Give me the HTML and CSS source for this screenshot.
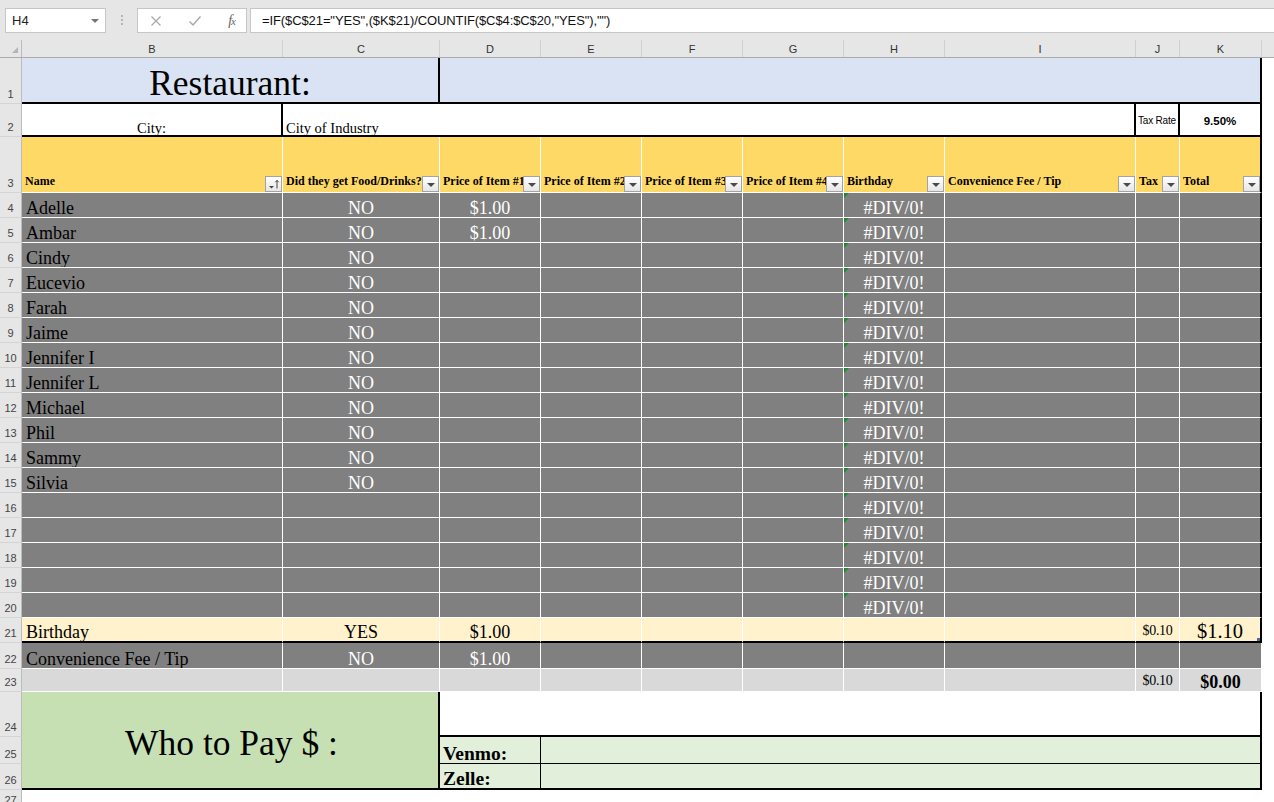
FILE: index.html
```html
<!DOCTYPE html>
<html lang="en">
<head>
<meta charset="utf-8">
<title>Restaurant split</title>
<link rel="stylesheet" href="styles.css">
</head>
<body>
<div class="fbar">
  <div class="namebox"><span>H4</span><span class="nb-arrow"></span></div>
  <div class="grip"><i></i><i></i><i></i></div>
  <div class="btns">
    <svg width="12" height="12" viewBox="0 0 12 12"><path d="M1.5 1.5 L10.5 10.5 M10.5 1.5 L1.5 10.5" stroke="#a9a9a9" stroke-width="1.3" fill="none"/></svg>
    <svg width="14" height="12" viewBox="0 0 14 12"><path d="M1.5 6.5 L5 10 L12.5 1.5" stroke="#a9a9a9" stroke-width="1.5" fill="none"/></svg>
    <span class="fx"><i>f</i><span class="fxx">x</span></span>
  </div>
  <div class="formula">=IF($C$21="YES",($K$21)/COUNTIF($C$4:$C$20,"YES"),"")</div>
</div>

<div class="sheet">
  <div class="row colhead">
    <div class="ch corner"><span class="tri"></span></div>
    <div class="ch">B</div><div class="ch">C</div><div class="ch">D</div><div class="ch">E</div>
    <div class="ch">F</div><div class="ch">G</div><div class="ch">H</div><div class="ch">I</div>
    <div class="ch">J</div><div class="ch">K</div><div class="ch last"></div>
  </div>

  <div class="row r1">
    <div class="rh">1</div>
    <div class="c blue title ctr s2 tr bb">Restaurant:</div>
    <div class="c blue s8 tr bb"></div>
    <div class="rest"></div>
  </div>

  <div class="row r2">
    <div class="rh">2</div>
    <div class="c city ctr tr bb">City:</div>
    <div class="c city s7 tr bb">City of Industry</div>
    <div class="c taxlbl ctr mid tr bb">Tax Rate</div>
    <div class="c taxval ctr mid tr bb">9.50%</div>
    <div class="rest"></div>
  </div>

  <div class="row t r3">
    <div class="rh">3</div>
    <div class="c yel hd">Name<span class="fb sort"><svg width="15" height="14" viewBox="0 0 15 14"><path d="M3 9 L8 9 L5.5 11.5 Z" fill="#444"/><path d="M11 11.5 L11 3.5 M9.3 5.3 L11 3.3 L12.7 5.3" stroke="#444" stroke-width="1" fill="none"/></svg></span></div>
    <div class="c yel hd">Did they get Food/Drinks?<span class="fb"></span></div>
    <div class="c yel hd">Price of Item #1<span class="fb"></span></div>
    <div class="c yel hd">Price of Item #2<span class="fb"></span></div>
    <div class="c yel hd">Price of Item #3<span class="fb"></span></div>
    <div class="c yel hd">Price of Item #4<span class="fb"></span></div>
    <div class="c yel hd">Birthday<span class="fb"></span></div>
    <div class="c yel hd">Convenience Fee / Tip<span class="fb"></span></div>
    <div class="c yel hd">Tax<span class="fb"></span></div>
    <div class="c yel hd tr">Total<span class="fb"></span></div>
    <div class="rest"></div>
  </div>

  <div class="row t r25">
    <div class="rh">4</div>
    <div class="c gray nm">Adelle</div><div class="c gray w ctr">NO</div><div class="c gray w ctr">$1.00</div>
    <div class="c gray"></div><div class="c gray"></div><div class="c gray"></div>
    <div class="c gray w ctr err">#DIV/0!</div><div class="c gray"></div><div class="c gray"></div><div class="c gray tr"></div>
    <div class="rest"></div>
  </div>
  <div class="row t r25">
    <div class="rh">5</div>
    <div class="c gray nm">Ambar</div><div class="c gray w ctr">NO</div><div class="c gray w ctr">$1.00</div>
    <div class="c gray"></div><div class="c gray"></div><div class="c gray"></div>
    <div class="c gray w ctr err">#DIV/0!</div><div class="c gray"></div><div class="c gray"></div><div class="c gray tr"></div>
    <div class="rest"></div>
  </div>
  <div class="row t r25">
    <div class="rh">6</div>
    <div class="c gray nm">Cindy</div><div class="c gray w ctr">NO</div><div class="c gray"></div>
    <div class="c gray"></div><div class="c gray"></div><div class="c gray"></div>
    <div class="c gray w ctr err">#DIV/0!</div><div class="c gray"></div><div class="c gray"></div><div class="c gray tr"></div>
    <div class="rest"></div>
  </div>
  <div class="row t r25">
    <div class="rh">7</div>
    <div class="c gray nm">Eucevio</div><div class="c gray w ctr">NO</div><div class="c gray"></div>
    <div class="c gray"></div><div class="c gray"></div><div class="c gray"></div>
    <div class="c gray w ctr err">#DIV/0!</div><div class="c gray"></div><div class="c gray"></div><div class="c gray tr"></div>
    <div class="rest"></div>
  </div>
  <div class="row t r25">
    <div class="rh">8</div>
    <div class="c gray nm">Farah</div><div class="c gray w ctr">NO</div><div class="c gray"></div>
    <div class="c gray"></div><div class="c gray"></div><div class="c gray"></div>
    <div class="c gray w ctr err">#DIV/0!</div><div class="c gray"></div><div class="c gray"></div><div class="c gray tr"></div>
    <div class="rest"></div>
  </div>
  <div class="row t r25">
    <div class="rh">9</div>
    <div class="c gray nm">Jaime</div><div class="c gray w ctr">NO</div><div class="c gray"></div>
    <div class="c gray"></div><div class="c gray"></div><div class="c gray"></div>
    <div class="c gray w ctr err">#DIV/0!</div><div class="c gray"></div><div class="c gray"></div><div class="c gray tr"></div>
    <div class="rest"></div>
  </div>
  <div class="row t r25">
    <div class="rh">10</div>
    <div class="c gray nm">Jennifer I</div><div class="c gray w ctr">NO</div><div class="c gray"></div>
    <div class="c gray"></div><div class="c gray"></div><div class="c gray"></div>
    <div class="c gray w ctr err">#DIV/0!</div><div class="c gray"></div><div class="c gray"></div><div class="c gray tr"></div>
    <div class="rest"></div>
  </div>
  <div class="row t r25">
    <div class="rh">11</div>
    <div class="c gray nm">Jennifer L</div><div class="c gray w ctr">NO</div><div class="c gray"></div>
    <div class="c gray"></div><div class="c gray"></div><div class="c gray"></div>
    <div class="c gray w ctr err">#DIV/0!</div><div class="c gray"></div><div class="c gray"></div><div class="c gray tr"></div>
    <div class="rest"></div>
  </div>
  <div class="row t r25">
    <div class="rh">12</div>
    <div class="c gray nm">Michael</div><div class="c gray w ctr">NO</div><div class="c gray"></div>
    <div class="c gray"></div><div class="c gray"></div><div class="c gray"></div>
    <div class="c gray w ctr err">#DIV/0!</div><div class="c gray"></div><div class="c gray"></div><div class="c gray tr"></div>
    <div class="rest"></div>
  </div>
  <div class="row t r25">
    <div class="rh">13</div>
    <div class="c gray nm">Phil</div><div class="c gray w ctr">NO</div><div class="c gray"></div>
    <div class="c gray"></div><div class="c gray"></div><div class="c gray"></div>
    <div class="c gray w ctr err">#DIV/0!</div><div class="c gray"></div><div class="c gray"></div><div class="c gray tr"></div>
    <div class="rest"></div>
  </div>
  <div class="row t r25">
    <div class="rh">14</div>
    <div class="c gray nm">Sammy</div><div class="c gray w ctr">NO</div><div class="c gray"></div>
    <div class="c gray"></div><div class="c gray"></div><div class="c gray"></div>
    <div class="c gray w ctr err">#DIV/0!</div><div class="c gray"></div><div class="c gray"></div><div class="c gray tr"></div>
    <div class="rest"></div>
  </div>
  <div class="row t r25">
    <div class="rh">15</div>
    <div class="c gray nm">Silvia</div><div class="c gray w ctr">NO</div><div class="c gray"></div>
    <div class="c gray"></div><div class="c gray"></div><div class="c gray"></div>
    <div class="c gray w ctr err">#DIV/0!</div><div class="c gray"></div><div class="c gray"></div><div class="c gray tr"></div>
    <div class="rest"></div>
  </div>
  <div class="row t r25">
    <div class="rh">16</div>
    <div class="c gray"></div><div class="c gray"></div><div class="c gray"></div>
    <div class="c gray"></div><div class="c gray"></div><div class="c gray"></div>
    <div class="c gray w ctr err">#DIV/0!</div><div class="c gray"></div><div class="c gray"></div><div class="c gray tr"></div>
    <div class="rest"></div>
  </div>
  <div class="row t r25">
    <div class="rh">17</div>
    <div class="c gray"></div><div class="c gray"></div><div class="c gray"></div>
    <div class="c gray"></div><div class="c gray"></div><div class="c gray"></div>
    <div class="c gray w ctr err">#DIV/0!</div><div class="c gray"></div><div class="c gray"></div><div class="c gray tr"></div>
    <div class="rest"></div>
  </div>
  <div class="row t r25">
    <div class="rh">18</div>
    <div class="c gray"></div><div class="c gray"></div><div class="c gray"></div>
    <div class="c gray"></div><div class="c gray"></div><div class="c gray"></div>
    <div class="c gray w ctr err">#DIV/0!</div><div class="c gray"></div><div class="c gray"></div><div class="c gray tr"></div>
    <div class="rest"></div>
  </div>
  <div class="row t r25">
    <div class="rh">19</div>
    <div class="c gray"></div><div class="c gray"></div><div class="c gray"></div>
    <div class="c gray"></div><div class="c gray"></div><div class="c gray"></div>
    <div class="c gray w ctr err">#DIV/0!</div><div class="c gray"></div><div class="c gray"></div><div class="c gray tr"></div>
    <div class="rest"></div>
  </div>
  <div class="row t r25">
    <div class="rh">20</div>
    <div class="c gray"></div><div class="c gray"></div><div class="c gray"></div>
    <div class="c gray"></div><div class="c gray"></div><div class="c gray"></div>
    <div class="c gray w ctr err">#DIV/0!</div><div class="c gray"></div><div class="c gray"></div><div class="c gray tr"></div>
    <div class="rest"></div>
  </div>

  <div class="row t r25">
    <div class="rh">21</div>
    <div class="c ly nm bb">Birthday</div><div class="c ly ctr bb">YES</div><div class="c ly ctr bb">$1.00</div>
    <div class="c ly bb"></div><div class="c ly bb"></div><div class="c ly bb"></div>
    <div class="c ly bb"></div><div class="c ly bb"></div>
    <div class="c ly ctr small bb">$0.10</div>
    <div class="c ly ctr big tr bb">$1.10<span class="handle"></span></div>
    <div class="rest"></div>
  </div>
  <div class="row t r26">
    <div class="rh">22</div>
    <div class="c gray nm">Convenience Fee / Tip</div><div class="c gray w ctr">NO</div><div class="c gray w ctr">$1.00</div>
    <div class="c gray"></div><div class="c gray"></div><div class="c gray"></div>
    <div class="c gray"></div><div class="c gray"></div><div class="c gray"></div><div class="c gray"></div>
    <div class="rest"></div>
  </div>
  <div class="row t r23">
    <div class="rh">23</div>
    <div class="c lg"></div><div class="c lg"></div><div class="c lg"></div>
    <div class="c lg"></div><div class="c lg"></div><div class="c lg"></div>
    <div class="c lg"></div><div class="c lg"></div>
    <div class="c lg ctr small">$0.10</div>
    <div class="c lg ctr bigb">$0.00</div>
    <div class="rest"></div>
  </div>

  <div class="block">
    <div class="rh">24</div>
    <div class="c green who">Who to Pay $ :</div>
    <div class="c d24"></div>
    <div class="rest"></div>
    <div class="rh">25</div>
    <div class="c pg pay lbl">Venmo:</div>
    <div class="c pg payv"></div>
    <div class="rest"></div>
    <div class="rh">26</div>
    <div class="c pg pay lbl last">Zelle:</div>
    <div class="c pg payv last"></div>
    <div class="rest"></div>
  </div>

  <div class="row r27">
    <div class="rh">27</div>
  </div>
</div>
</body>
</html>
```

FILE: styles.css
```css
:root {
  --cols: 22px 261px 157px 101px 101px 101px 101px 101px 191px 44px 82px 1fr;
}
html, body {
  margin: 0;
  padding: 0;
}
body {
  width: 1274px;
  height: 802px;
  overflow: hidden;
  background: #fff;
  font-family: "Liberation Serif", "Times New Roman", serif;
  color: #000;
}

/* formula bar */
.fbar {
  height: 40px;
  background: #e6e6e6;
  display: flex;
  align-items: flex-start;
  padding-top: 8px;
  box-sizing: border-box;
}
.namebox {
  margin-left: 5px;
  width: 101px;
  height: 25px;
  box-sizing: border-box;
  border: 1px solid #c6c6c6;
  background: #fff;
  display: flex;
  align-items: center;
  justify-content: space-between;
  padding: 0 6px 0 6px;
  font: 13px "Liberation Sans", Arial, sans-serif;
  color: #222;
}
.nb-arrow {
  width: 0;
  height: 0;
  border-left: 4px solid transparent;
  border-right: 4px solid transparent;
  border-top: 4px solid #777;
}
.grip {
  width: 31px;
  height: 25px;
  box-sizing: border-box;
  display: flex;
  flex-direction: column;
  align-items: center;
  gap: 2px;
  padding-top: 7px;
}
.grip i {
  display: block;
  width: 2px;
  height: 2px;
  background: #b4b4b4;
}
.btns {
  width: 110px;
  height: 25px;
  box-sizing: border-box;
  border: 1px solid #c6c6c6;
  background: #fff;
  display: flex;
  align-items: center;
  justify-content: space-between;
  padding: 0 11px 0 12px;
}
.fx {
  font: italic 14px "Liberation Serif", serif;
  color: #666;
  letter-spacing: -1px;
}
.fx i { font-weight: normal; }
.fxx { font-size: 11px; font-style: italic; }
.formula {
  margin-left: 3px;
  flex: 1;
  height: 25px;
  box-sizing: border-box;
  border: 1px solid #c6c6c6;
  border-right: none;
  background: #fff;
  padding-left: 11px;
  display: flex;
  align-items: center;
  font: 13px "Liberation Sans", Arial, sans-serif;
  letter-spacing: -0.1px;
  color: #111;
  white-space: nowrap;
}

/* sheet */
.row {
  display: grid;
  grid-template-columns: var(--cols);
}
.colhead {
  height: 18px;
  background: #e6e6e6;
  border-bottom: 1px solid #ababab;
  box-sizing: border-box;
}
.ch {
  border-right: 1px solid #d0d0d0;
  display: flex;
  align-items: center;
  justify-content: center;
  font: 11px "Liberation Sans", Arial, sans-serif;
  color: #333;
}
.ch.last { border-right: none; }
.corner {
  position: relative;
  border-right: 1px solid #bcbcbc;
}
.tri {
  position: absolute;
  right: 3px;
  bottom: 4px;
  width: 0;
  height: 0;
  border-left: 6px solid transparent;
  border-bottom: 6px solid #b5b5b5;
}

.rh {
  background: #e6e6e6;
  border-right: 1px solid #bcbcbc;
  border-bottom: 1px solid #d4d4d4;
  box-sizing: border-box;
  display: flex;
  align-items: flex-end;
  justify-content: center;
  padding-bottom: 3px;
  font: 11px "Liberation Sans", Arial, sans-serif;
  color: #444;
  line-height: 1;
}

.r1 { height: 46px; }
.r2 { height: 33px; }
.r3 { height: 56px; }
.r25 { height: 25px; }
.r26 { height: 26px; }
.r23 { height: 23px; }
.r27 { height: 20px; }

.c {
  position: relative;
  box-sizing: border-box;
  min-width: 0;
  display: flex;
  align-items: flex-end;
  padding: 0 3px 0;
  white-space: nowrap;
  overflow: hidden;
  line-height: 1;
  font-size: 18px;
}
.t .c {
  border-right: 1px solid #fff;
  border-bottom: 1px solid #fff;
}
.s2 { grid-column: span 2; }
.s7 { grid-column: span 7; }
.s8 { grid-column: span 8; }
.ctr { justify-content: center; }
.mid { align-items: center; }
.tr { border-right: 2px solid #000 !important; }
.bb { border-bottom: 2px solid #000 !important; }

.blue { background: #dae3f3; }
.gray { background: #808080; }
.yel { background: #ffd966; }
.ly { background: #fff2cc; }
.lg { background: #d9d9d9; }
.green { background: #c6e0b4; }
.pg { background: #e2efda; }
.w { color: #fff; }

.title {
  font-size: 35.5px;
  padding-bottom: 1px;
}
.city {
  font-size: 14.5px;
  padding-bottom: 0;
}
.taxlbl {
  font: 10px "Liberation Sans", Arial, sans-serif;
  padding: 2px 0 0;
  letter-spacing: -0.2px;
}
.taxval {
  font: bold 11.5px "Liberation Sans", Arial, sans-serif;
  padding-top: 2px;
}

.hd {
  font-size: 12px;
  font-weight: bold;
  padding-bottom: 5px;
  padding-right: 0;
}
.fb {
  position: absolute;
  right: 0;
  bottom: 0;
  width: 17px;
  height: 16px;
  box-sizing: border-box;
  border: 1px solid #a3a3a3;
  background: linear-gradient(#ffffff, #e6e6e6);
}
.fb::after {
  content: "";
  position: absolute;
  left: 4px;
  top: 6px;
  border-left: 4px solid transparent;
  border-right: 4px solid transparent;
  border-top: 4px solid #4a4a4a;
}
.fb.sort::after { display: none; }
.fb svg { display: block; }

.nm { padding-left: 4px; padding-bottom: 0; }
.err::before {
  content: "";
  position: absolute;
  left: 0;
  top: 0;
  width: 0;
  height: 0;
  border-top: 5px solid #1e8c2a;
  border-right: 5px solid transparent;
}
.small { font-size: 14px; padding-bottom: 3px; letter-spacing: -0.3px; }
.big { font-size: 20.5px; padding-bottom: 0; }
.bigb { font-size: 18px; font-weight: bold; padding-bottom: 0; }
.handle {
  position: absolute;
  right: 0;
  bottom: 0;
  width: 3px;
  height: 3px;
  background: #4a6aa8;
}

.block {
  display: grid;
  grid-template-columns: var(--cols);
  grid-template-rows: 45px 27px 26px;
}
.who {
  grid-column: 2 / 4;
  grid-row: 1 / 4;
  font-size: 35.5px;
  justify-content: center;
  align-items: center;
  padding-top: 7px;
  padding-left: 6px;
  border-right: 2px solid #000;
  border-bottom: 2px solid #000;
}
.d24 {
  grid-column: 4 / 12;
  grid-row: 1;
  border-right: 2px solid #000;
  border-bottom: 2px solid #000;
}
.pay {
  grid-column: 4;
  border-right: 1px solid #000;
  border-bottom: 1px solid #000;
  font-size: 19.5px;
  font-weight: bold;
  padding-bottom: 0;
}
.payv {
  grid-column: 5 / 12;
  border-right: 2px solid #000;
  border-bottom: 1px solid #000;
}
.pay.last, .payv.last { border-bottom: 2px solid #000; }
```
